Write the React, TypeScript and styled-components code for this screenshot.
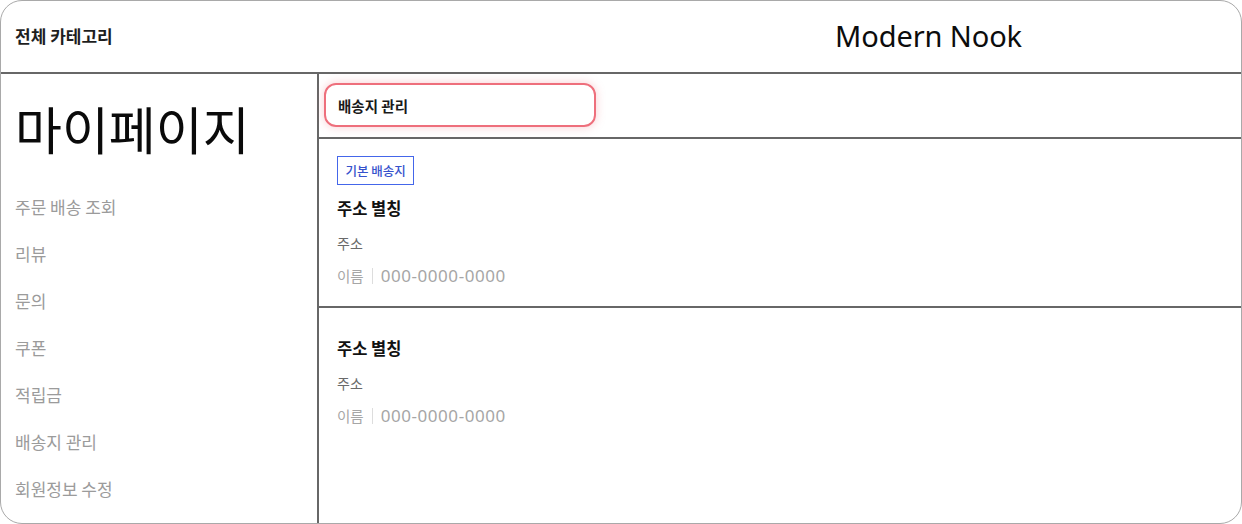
import styled, { createGlobalStyle } from 'styled-components'

const GlobalStyle = createGlobalStyle`
    html, body {
        margin: 0;
        padding: 0;
        background: #ffffff;
    }
    * {
        box-sizing: border-box;
    }
`

const LINE = '#676767'
const KR = `'Noto Sans CJK KR', 'Noto Sans', sans-serif`

const Frame = styled.div`
    width: 1242px;
    height: 524px;
    border: 1px solid #a9a9a9;
    border-radius: 22px;
    overflow: hidden;
    display: flex;
    flex-direction: column;
    background: #fff;
    font-family: ${KR};
    color: #111;
`

const Header = styled.header`
    height: 73px;
    flex-shrink: 0;
    display: flex;
    align-items: center;
    padding-left: 14px;
    border-bottom: 2px solid ${LINE};
`

const CategoryButton = styled.span`
    font-size: 17px;
    font-weight: 600;
    color: #1e1e1e;
    margin-top: -2px;
`

const Logo = styled.h1`
    margin: -3px 219px 0 auto;
    font-family: 'Noto Sans', 'Open Sans', sans-serif;
    font-size: 29px;
    font-weight: 400;
    color: #0c0c0c;
    letter-spacing: -0.1px;
`

const Body = styled.div`
    flex: 1;
    display: flex;
    min-height: 0;
`

const Sidebar = styled.aside`
    width: 318px;
    flex-shrink: 0;
    border-right: 2px solid ${LINE};
    padding: 26px 0 0 14px;
    display: flex;
    flex-direction: column;
`

const PageTitle = styled.h2`
    margin: 0 0 41px;
    font-size: 51px;
    line-height: 56px;
    font-weight: 400;
    color: #0a0a0a;
`

const MenuList = styled.ul`
    list-style: none;
    margin: 0;
    padding: 0;
    display: flex;
    flex-direction: column;
    gap: 27px;
`

const MenuItem = styled.li`
    font-size: 17px;
    line-height: 20px;
    color: #9b9b9b;
`

const Main = styled.main`
    flex: 1;
    display: flex;
    flex-direction: column;
`

const TopBar = styled.div`
    height: 65px;
    flex-shrink: 0;
    border-bottom: 2px solid ${LINE};
    padding: 9px 0 0 5px;
`

const SectionBox = styled.div`
    width: 272px;
    height: 44px;
    border: 2.5px solid #ee6f7c;
    border-radius: 12px;
    box-shadow: 0 0 10px rgba(238, 111, 124, 0.35);
    display: flex;
    align-items: center;
    padding-left: 12px;
    font-size: 14.5px;
    font-weight: 700;
    color: #1a1a1a;
`

const Card = styled.section<{ $divider?: boolean }>`
    padding: 17px 18px 20px;
    border-bottom: ${p => (p.$divider ? `2px solid ${LINE}` : 'none')};
`

const Badge = styled.span`
    display: inline-flex;
    align-items: center;
    height: 29px;
    padding: 0 7.5px;
    border: 1.5px solid #4466ea;
    font-size: 12.5px;
    font-weight: 500;
    color: #3652cc;
`

const Alias = styled.div`
    margin-top: 13px;
    font-size: 16.5px;
    line-height: 20px;
    font-weight: 700;
    color: #111;
`

const AddressLine = styled.div`
    margin-top: 16px;
    font-size: 14px;
    line-height: 18px;
    color: #6a6a6a;
`

const Contact = styled.div`
    margin-top: 14px;
    display: flex;
    align-items: center;
    font-size: 14.5px;
    line-height: 20px;
    color: #a6a6a6;
`

const Bar = styled.span`
    width: 1px;
    height: 16px;
    background: #dddddd;
    margin: 0 8px;
`

const Phone = styled.span`
    font-family: 'Noto Sans', sans-serif;
    font-size: 17px;
    letter-spacing: 0.55px;
`

const menu = ['주문 배송 조회', '리뷰', '문의', '쿠폰', '적립금', '배송지 관리', '회원정보 수정']

interface Address {
    isDefault: boolean
    alias: string
    address: string
    name: string
    phone: string
}

const addresses: Address[] = [
    { isDefault: true, alias: '주소 별칭', address: '주소', name: '이름', phone: '000-0000-0000' },
    { isDefault: false, alias: '주소 별칭', address: '주소', name: '이름', phone: '000-0000-0000' },
]

export default function App() {
    return (
        <>
            <GlobalStyle />
            <Frame>
                <Header>
                    <CategoryButton>전체 카테고리</CategoryButton>
                    <Logo>Modern Nook</Logo>
                </Header>
                <Body>
                    <Sidebar>
                        <PageTitle>마이페이지</PageTitle>
                        <MenuList>
                            {menu.map(m => (
                                <MenuItem key={m}>{m}</MenuItem>
                            ))}
                        </MenuList>
                    </Sidebar>
                    <Main>
                        <TopBar>
                            <SectionBox>배송지 관리</SectionBox>
                        </TopBar>
                        {addresses.map((a, i) => (
                            <Card key={i} $divider={i === 0}>
                                {a.isDefault && <Badge>기본 배송지</Badge>}
                                <Alias>{a.alias}</Alias>
                                <AddressLine>{a.address}</AddressLine>
                                <Contact>
                                    {a.name}
                                    <Bar />
                                    <Phone>{a.phone}</Phone>
                                </Contact>
                            </Card>
                        ))}
                    </Main>
                </Body>
            </Frame>
        </>
    )
}
